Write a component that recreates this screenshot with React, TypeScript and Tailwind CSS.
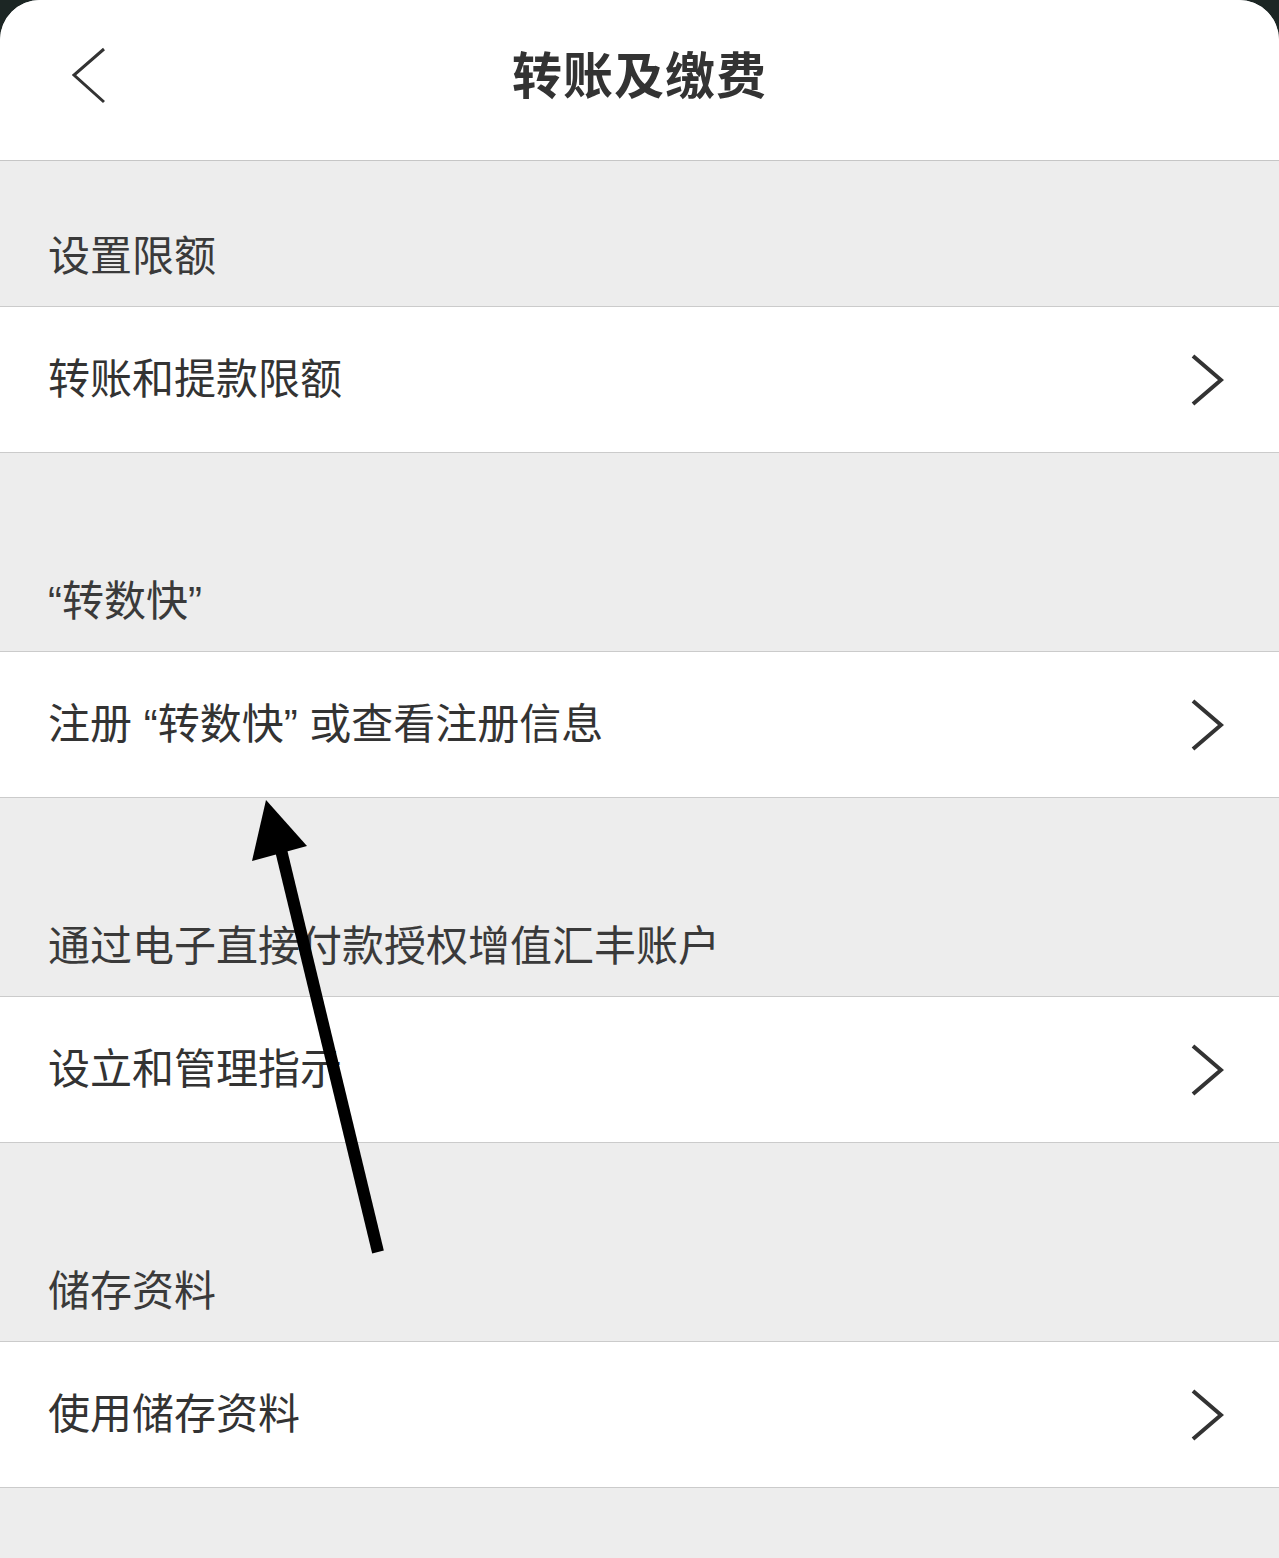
import React from "react";

const font = { fontFamily: '"Liberation Sans", "Noto Sans CJK SC", sans-serif' };

type Section = { label: string; item: string; tall: boolean };

const sections: Section[] = [
  { label: "设置限额", item: "转账和提款限额", tall: false },
  { label: "“转数快”", item: "注册 “转数快” 或查看注册信息", tall: true },
  { label: "通过电子直接付款授权增值汇丰账户", item: "设立和管理指示", tall: true },
  { label: "储存资料", item: "使用储存资料", tall: true },
];

const Chevron = () => (
  <svg width="34" height="52" viewBox="0 0 34 52" fill="none" className="mr-[55px]">
    <polyline points="3,2 31,26 3,50" stroke="#333333" strokeWidth="4" strokeLinejoin="miter" />
  </svg>
);

export default function App() {
  return (
    <div className="relative min-h-[1558px] w-full bg-[#1c2624]" style={font}>
      <div className="flex min-h-[1558px] flex-col overflow-hidden rounded-t-[40px] bg-[#ededed]">
        <header className="relative flex h-[161px] items-center justify-center border-b border-[#c6c6c6] bg-white">
          <svg width="40" height="58" viewBox="0 0 40 58" fill="none" className="absolute left-[68px] top-[47px]">
            <polyline points="36,2 6,28 36,55" stroke="#333333" strokeWidth="3" />
          </svg>
          <h1 className="mb-[6px] text-[50px] font-bold leading-none tracking-[1px] text-[#333333]">转账及缴费</h1>
        </header>

        {sections.map((s) => (
          <div key={s.label} className="flex flex-col">
            <div
              className={`flex items-end pl-[48px] pb-[27px] text-[42px] leading-[44px] text-[#3a3a3a] ${
                s.tall ? "h-[198px]" : "h-[145px]"
              }`}
            >
              {s.label}
            </div>
            <div className="flex h-[147px] items-center justify-between border-y border-[#cbcbcb] bg-white pl-[48px]">
              <span className="text-[42px] leading-[44px] text-[#333333]">{s.item}</span>
              <Chevron />
            </div>
          </div>
        ))}

        <div className="flex-1" />
      </div>

      <svg
        className="pointer-events-none absolute left-0 top-0"
        width="1279"
        height="1558"
        viewBox="0 0 1279 1558"
      >
        <line x1="378" y1="1252" x2="281" y2="850" stroke="#000" strokeWidth="12" />
        <polygon points="266,800 252,861 307,846" fill="#000" />
      </svg>
    </div>
  );
}
